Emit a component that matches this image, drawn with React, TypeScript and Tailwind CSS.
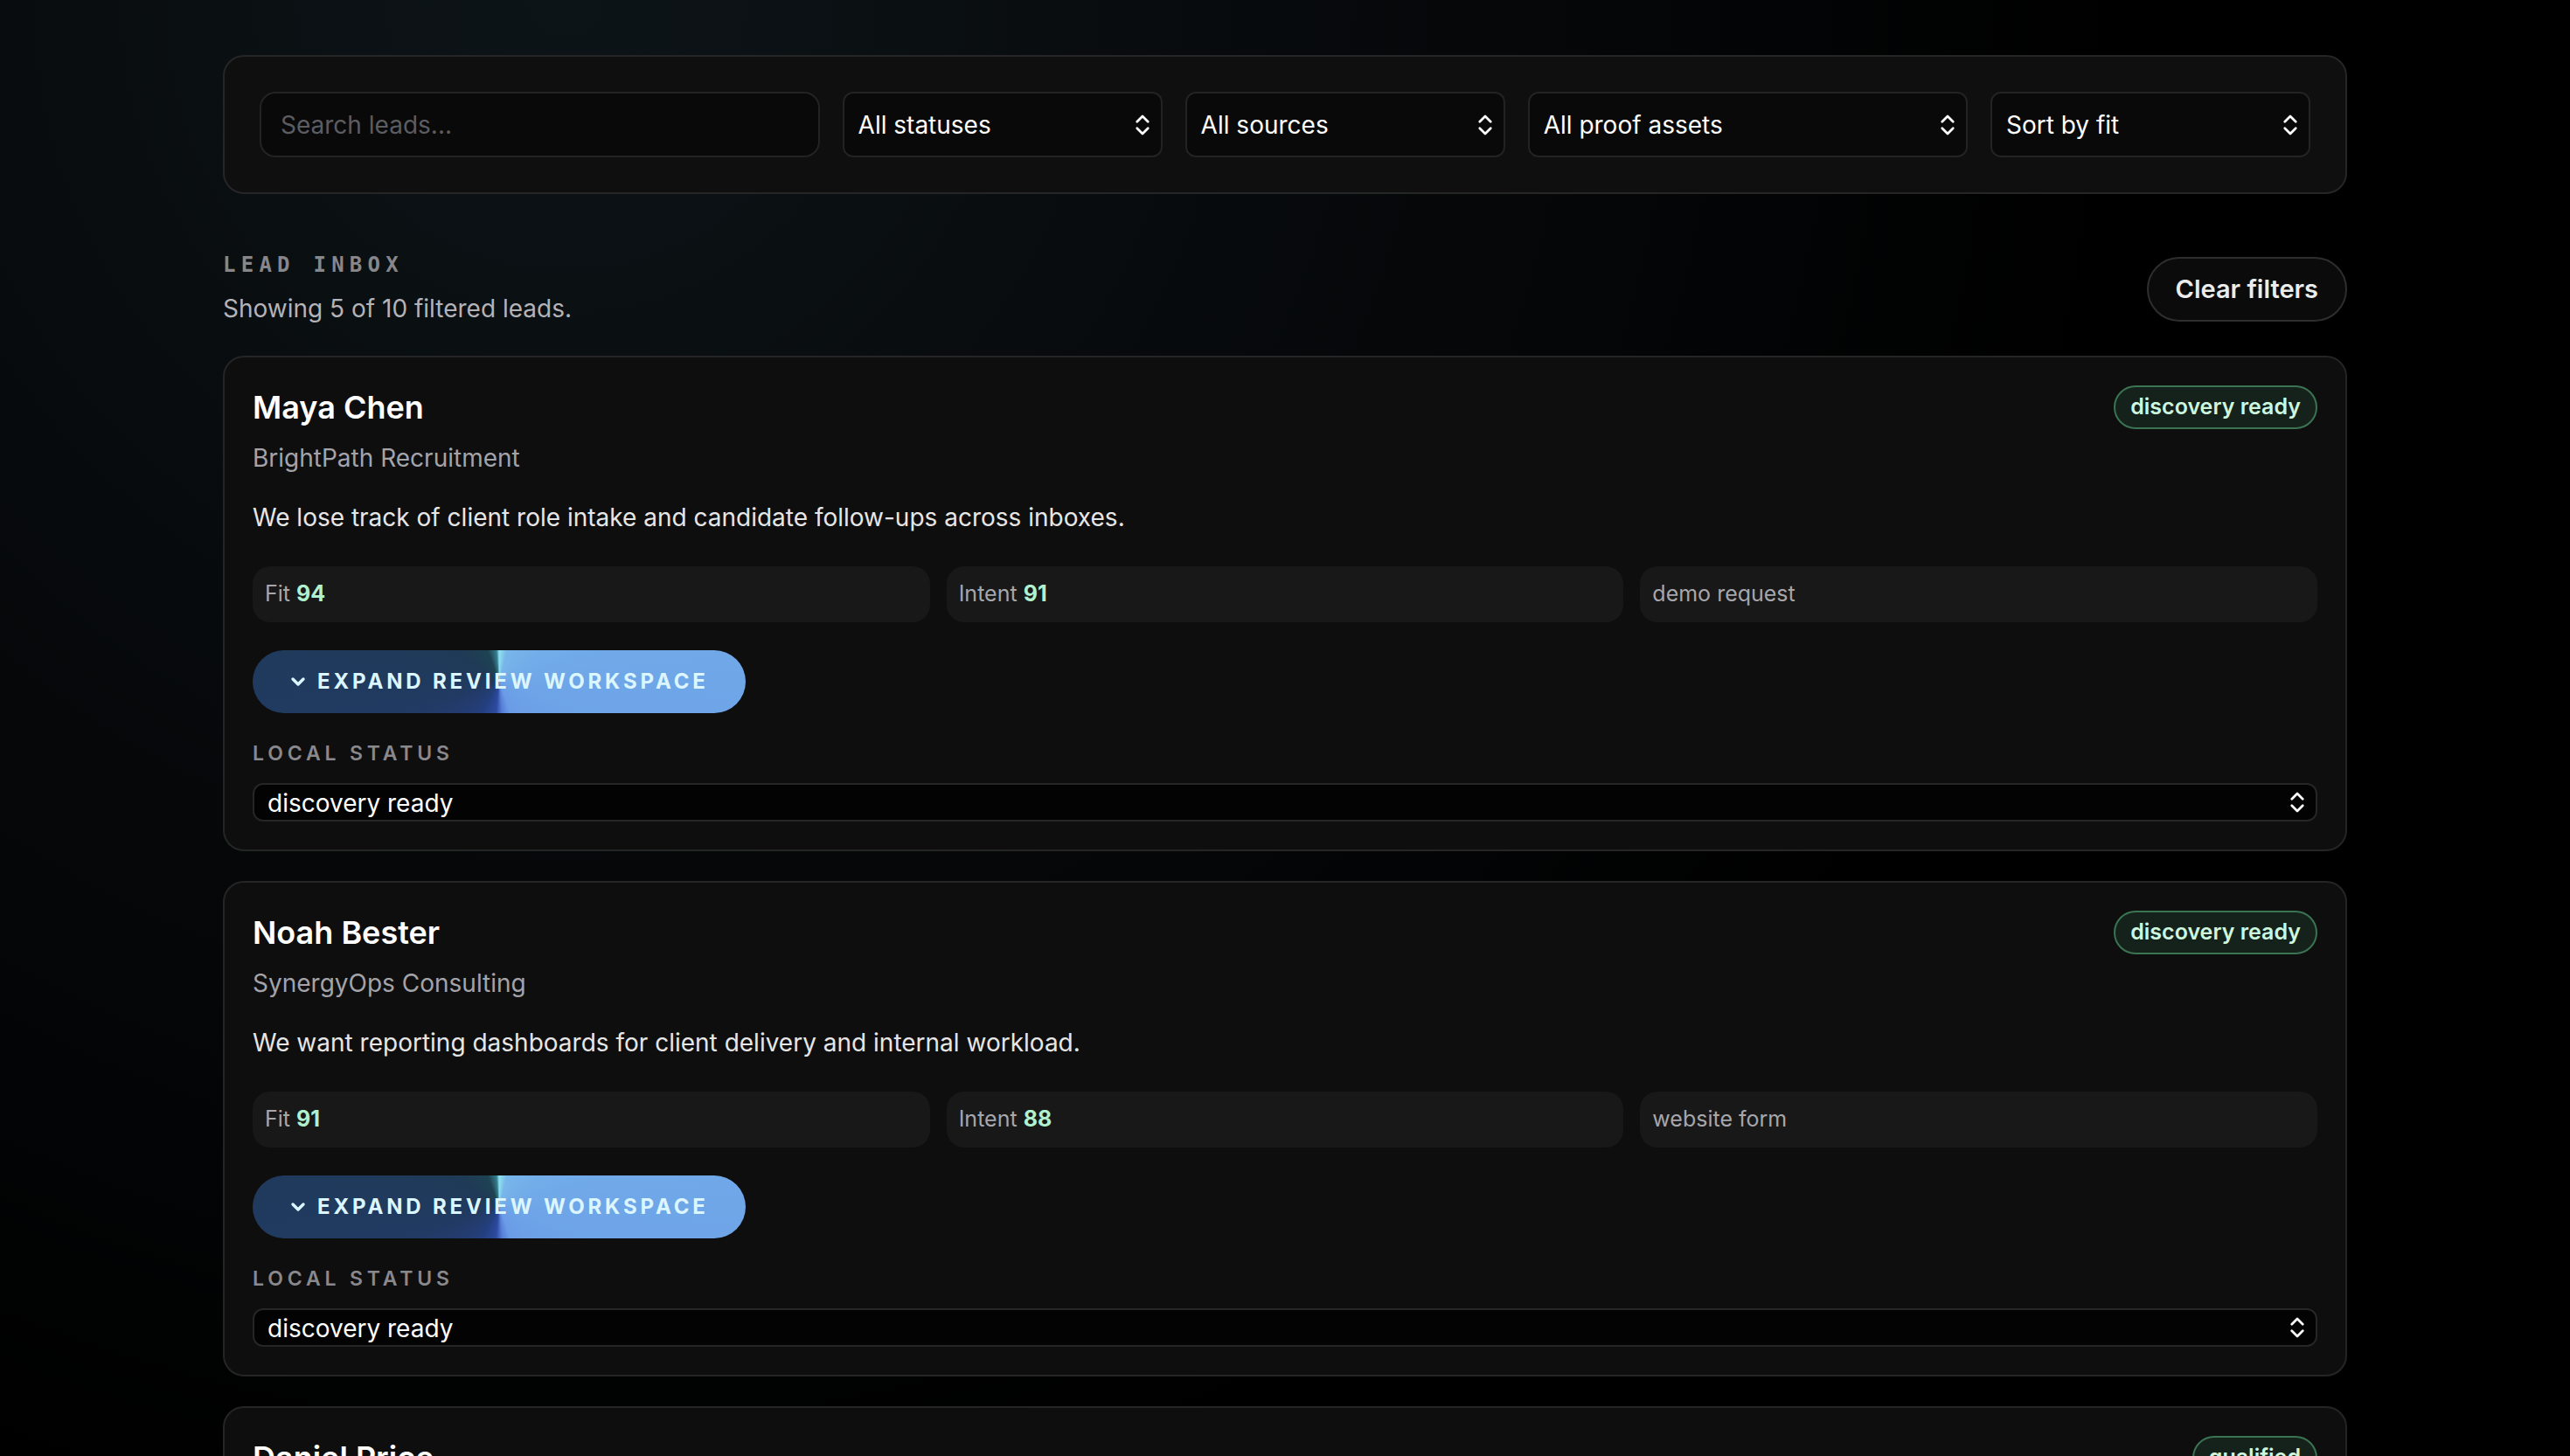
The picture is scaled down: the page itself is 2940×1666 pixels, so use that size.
import { ChevronDown, ChevronsUpDown } from 'lucide-react'

type Lead = {
  name: string
  company: string
  pain: string
  status: string
  fit: number
  intent: number
  source: string
}

const LEADS: Lead[] = [
  {
    name: 'Maya Chen',
    company: 'BrightPath Recruitment',
    pain: 'We lose track of client role intake and candidate follow-ups across inboxes.',
    status: 'discovery ready',
    fit: 94,
    intent: 91,
    source: 'demo request',
  },
  {
    name: 'Noah Bester',
    company: 'SynergyOps Consulting',
    pain: 'We want reporting dashboards for client delivery and internal workload.',
    status: 'discovery ready',
    fit: 91,
    intent: 88,
    source: 'website form',
  },
  {
    name: 'Daniel Price',
    company: 'Northline Logistics',
    pain: 'Dispatch updates live in spreadsheets and nobody trusts the latest version.',
    status: 'qualified',
    fit: 87,
    intent: 84,
    source: 'referral',
  },
]

const FILTERS = [
  { label: 'All statuses', options: ['All statuses', 'new', 'qualified', 'discovery ready'] },
  { label: 'All sources', options: ['All sources', 'demo request', 'website form', 'referral'] },
  { label: 'All proof assets', options: ['All proof assets', 'case study', 'dashboard demo'] },
  { label: 'Sort by fit', options: ['Sort by fit', 'Sort by intent', 'Sort by newest'] },
]

const STATUSES = ['new', 'qualified', 'discovery ready', 'proposal', 'closed']

function SelectBox({ value, options, className }: { value: string; options: string[]; className: string }) {
  return (
    <div className="relative">
      <select defaultValue={value} className={className}>
        {options.map((o) => (
          <option key={o}>{o}</option>
        ))}
      </select>
      <ChevronsUpDown
        size={30}
        strokeWidth={2.2}
        className="pointer-events-none absolute right-[8px] top-1/2 -translate-y-1/2 text-white"
      />
    </div>
  )
}

function LeadCard({ lead }: { lead: Lead }) {
  return (
    <article className="rounded-[24px] border-2 border-[#252525] bg-[#0e0e0e] p-[32px]">
      <div className="flex items-center justify-between">
        <h2 className="text-[36px] font-semibold leading-[44px] text-white">{lead.name}</h2>
        <span className="flex h-[50px] items-center rounded-full border-2 border-[#3a7453] bg-[#15211b] px-[17px] text-[25px] font-semibold text-[#cdf6df]">
          {lead.status}
        </span>
      </div>
      <p className="mt-[12px] text-[28px] leading-[42px] text-[#a3a3a9]">{lead.company}</p>
      <p className="mt-[26px] text-[28px] leading-[42px] text-[#e6e6e6]">{lead.pain}</p>

      <div className="mt-[35px] grid grid-cols-3 gap-[19px]">
        <div className="flex h-[64px] items-center rounded-[20px] bg-[#181818] px-[14px] text-[25px] text-[#a6a6ab]">
          Fit&nbsp;<span className="font-bold text-[#b0f0cf]">{lead.fit}</span>
        </div>
        <div className="flex h-[64px] items-center rounded-[20px] bg-[#181818] px-[14px] text-[25px] text-[#a6a6ab]">
          Intent&nbsp;<span className="font-bold text-[#b0f0cf]">{lead.intent}</span>
        </div>
        <div className="flex h-[64px] items-center rounded-[20px] bg-[#181818] px-[14px] text-[25px] text-[#a6a6ab]">
          {lead.source}
        </div>
      </div>

      <button className="mt-[32px] flex h-[72px] w-[564px] items-center gap-[10px] rounded-full bg-[conic-gradient(from_0deg_at_50%_50%,#8ee2ef_0deg,#78b6ea_14deg,#6fa6e8_90deg,#6a9ce6_160deg,#587fd8_174deg,#2c4aa0_186deg,#243f7e_210deg,#213a62_255deg,#1f3a56_305deg,#1e4352_340deg,#357c8e_355deg,#8ee2ef_360deg)] pl-[40px] text-[24px] font-bold tracking-[0.16em] text-[#dcf6ff]">
        <ChevronDown size={24} strokeWidth={3.4} />
        EXPAND REVIEW WORKSPACE
      </button>

      <p className="mt-[30px] text-[23px] font-semibold leading-[33px] tracking-[0.21em] text-[#88888d]">LOCAL STATUS</p>
      <div className="mt-[17px]">
        <SelectBox
          value={lead.status}
          options={STATUSES}
          className="h-[44px] w-full appearance-none rounded-[12px] border-2 border-[#262626] bg-[#030303] pl-[15px] pr-[48px] text-[28px] text-white outline-none"
        />
      </div>
    </article>
  )
}

export default function App() {
  return (
    <div className="min-h-screen bg-black bg-[radial-gradient(circle_at_22%_0%,#0d1418_0%,#070a0c_25%,#000_55%)] font-['Inter',sans-serif] text-white">
      <main className="mx-auto w-[2430px] pb-[80px] pt-[63px]">
        <section className="rounded-[24px] border-2 border-[#262626] bg-[#0f0f0f] p-[40px]">
          <div className="grid grid-cols-[1.75fr_1fr_1fr_1.375fr_1fr] gap-[26px]">
            <input
              type="text"
              placeholder="Search leads..."
              className="h-[75px] w-full rounded-[18px] border-2 border-[#232323] bg-[#090909] px-[22px] text-[28px] text-white outline-none placeholder:text-[#5c5c61]"
            />
            {FILTERS.map((f) => (
              <SelectBox
                key={f.label}
                value={f.label}
                options={f.options}
                className="h-[75px] w-full appearance-none rounded-[12px] border-2 border-[#232323] bg-[#090909] pl-[16px] pr-[48px] text-[28px] text-white outline-none"
              />
            ))}
          </div>
        </section>

        <div className="mb-[33px] mt-[65px] flex items-center justify-between">
          <div>
            <p className="font-['DejaVu_Sans_Mono',monospace] text-[24px] font-bold leading-[33px] tracking-[0.26em] text-[#86868b]">
              LEAD INBOX
            </p>
            <p className="mt-[12px] text-[28px] leading-[42px] text-[#b3b3b8]">Showing 5 of 10 filtered leads.</p>
          </div>
          <button className="h-[74px] rounded-full border-2 border-[#2e2e2e] bg-[#0b0b0b] px-[31px] text-[29px] font-semibold text-[#ececec]">
            Clear filters
          </button>
        </div>

        <div className="flex flex-col gap-[34px]">
          {LEADS.map((lead) => (
            <LeadCard key={lead.name} lead={lead} />
          ))}
        </div>
      </main>
    </div>
  )
}
